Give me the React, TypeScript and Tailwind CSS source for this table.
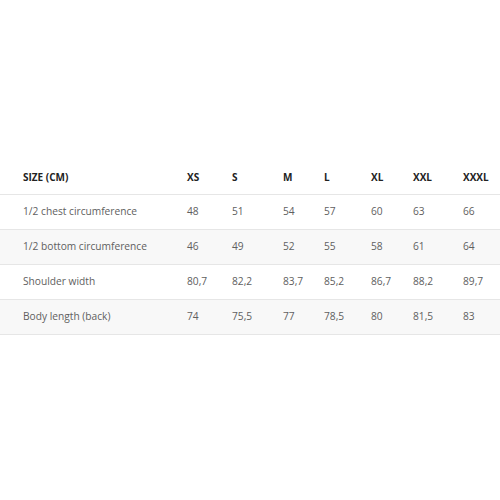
const sizes = ["XS", "S", "M", "L", "XL", "XXL", "XXXL"];

const rows = [
  { label: "1/2 chest circumference", values: ["48", "51", "54", "57", "60", "63", "66"] },
  { label: "1/2 bottom circumference", values: ["46", "49", "52", "55", "58", "61", "64"] },
  { label: "Shoulder width", values: ["80,7", "82,2", "83,7", "85,2", "86,7", "88,2", "89,7"] },
  { label: "Body length (back)", values: ["74", "75,5", "77", "78,5", "80", "81,5", "83"] },
];

const cols = "grid grid-cols-[187px_45px_51px_41px_47px_42px_50px_1fr] items-center";

export default function App() {
  return (
    <div className="w-[500px] h-[500px] bg-white pt-[160px] font-['Open_Sans',sans-serif]">
      <div className={`${cols} h-[35px] border-b border-[#e6e6e6] text-[10px] font-bold text-[#222]`}>
        <div className="pl-[23px]">SIZE (CM)</div>
        {sizes.map((s) => (
          <div key={s}>{s}</div>
        ))}
      </div>
      {rows.map((r, i) => (
        <div
          key={r.label}
          className={`${cols} h-[35px] border-b border-[#e6e6e6] text-[10.2px] text-[#606060] ${
            i % 2 === 1 ? "bg-[#f8f8f8]" : "bg-white"
          }`}
        >
          <div className="pl-[23px]">{r.label}</div>
          {r.values.map((v, j) => (
            <div key={j}>{v}</div>
          ))}
        </div>
      ))}
    </div>
  );
}
